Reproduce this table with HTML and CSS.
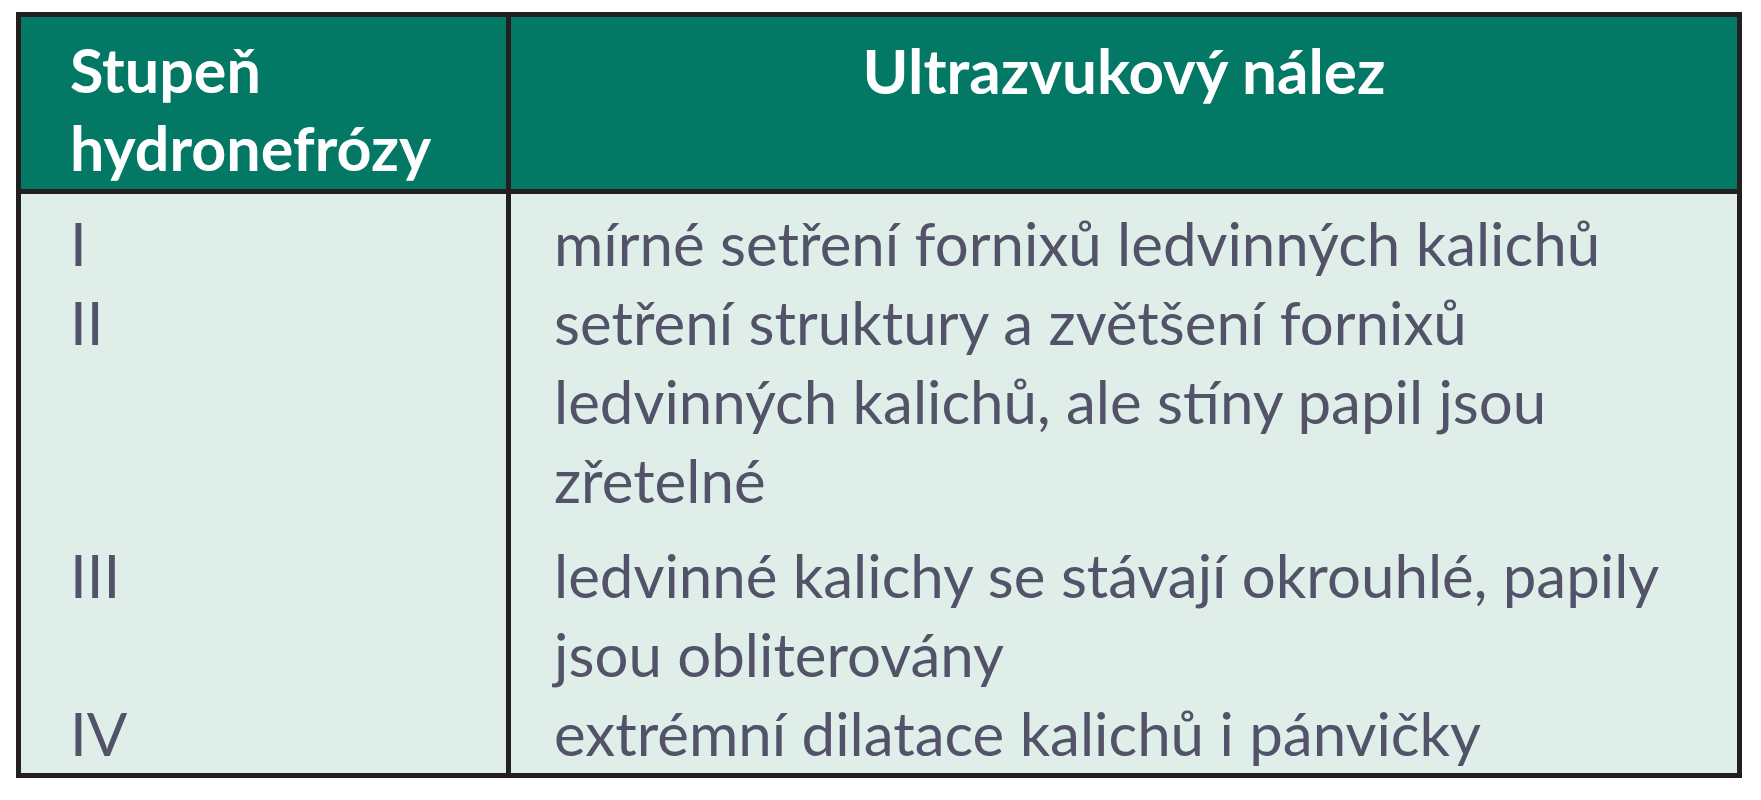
FILE: index.html
```html
<!DOCTYPE html>
<html lang="cs">
<head>
<meta charset="utf-8">
<title>Stupeň hydronefrózy</title>
<link rel="stylesheet" href="styles.css">
</head>
<body>
<table class="grade-table">
  <colgroup>
    <col class="col-grade">
    <col class="col-finding">
  </colgroup>
  <thead>
    <tr>
      <th class="head-grade">Stupeň<br>hydronefrózy</th>
      <th class="head-finding">Ultrazvukový nález</th>
    </tr>
  </thead>
  <tbody>
    <tr class="row-first">
      <td class="cell-grade">I</td>
      <td class="cell-finding">mírné setření fornixů ledvinných kalichů</td>
    </tr>
    <tr>
      <td class="cell-grade">II</td>
      <td class="cell-finding">setření struktury a zvětšení fornixů<br>ledvinných kalichů, ale stíny papil jsou<br>zřetelné</td>
    </tr>
    <tr class="row-spaced">
      <td class="cell-grade">III</td>
      <td class="cell-finding">ledvinné kalichy se stávají okrouhlé, papily<br>jsou obliterovány</td>
    </tr>
    <tr>
      <td class="cell-grade">IV</td>
      <td class="cell-finding">extrémní dilatace kalichů i pánvičky</td>
    </tr>
  </tbody>
</table>
</body>
</html>
```

FILE: styles.css
```css
html, body {
  margin: 0;
  padding: 0;
  background: #ffffff;
}

body {
  padding: 12px 0 0 16px;
  font-family: Lato, "Open Sans", "Liberation Sans", sans-serif;
}

.grade-table {
  width: 1726px;
  table-layout: fixed;
  border-collapse: separate;
  border-spacing: 0;
  border: 5px solid #231f20;
  background: #dfeee8;
}

.col-grade { width: 490px; }
.col-finding { width: 1226px; }

.grade-table th,
.grade-table td {
  vertical-align: top;
  border-right: 5px solid #231f20;
}

.grade-table th:last-child,
.grade-table td:last-child {
  border-right: 0;
}

.grade-table th {
  background: #027865;
  color: #ffffff;
  font-weight: 700;
  font-size: 61px;
  line-height: 78px;
  padding: 14px 0 2px 0;
  border-bottom: 5px solid #231f20;
}

.head-grade {
  text-align: left;
  padding-left: 49px !important;
}

.head-finding {
  text-align: center;
  font-size: 62px !important;
}

.grade-table td {
  color: #525268;
  font-weight: 400;
  font-size: 60px;
  line-height: 79px;
  padding: 0;
}

.cell-grade { padding-left: 49px !important; }
.cell-finding { padding-left: 43px !important; }

.row-first td { padding-top: 10px; }
.row-spaced td { padding-top: 16px; }
```
